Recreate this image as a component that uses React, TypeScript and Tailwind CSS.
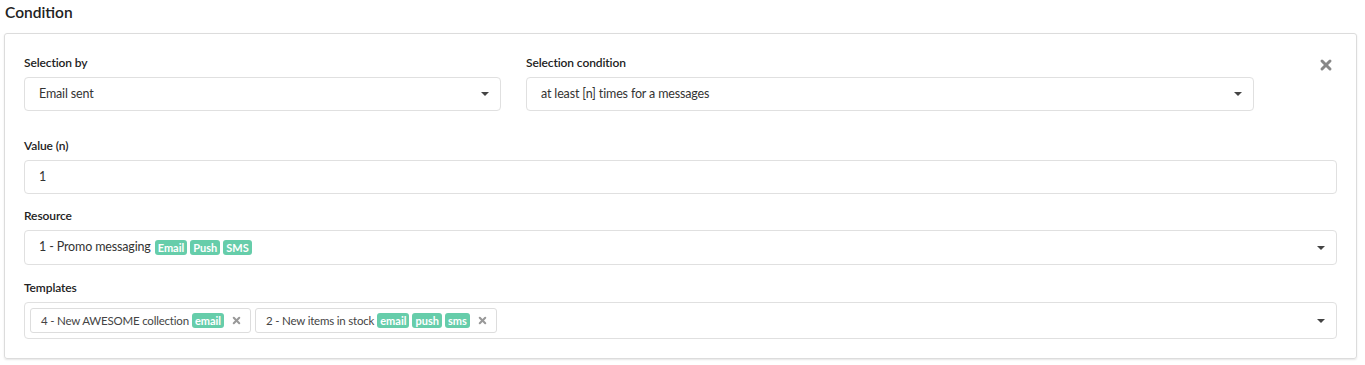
import { X } from "lucide-react";

const Caret = () => (
  <span className="inline-block w-0 h-0 border-l-[4px] border-r-[4px] border-t-[4px] border-l-transparent border-r-transparent border-t-[#444]" />
);

const Badge = ({ label }: { label: string }) => (
  <span className="inline-flex items-center h-[15px] px-[3px] rounded-[3px] bg-[#66cdaa] text-white text-[11px] font-bold leading-none tracking-normal">
    {label}
  </span>
);

const Field = ({ label, children, className = "" }: { label: string; children: React.ReactNode; className?: string }) => (
  <div className={`flex flex-col ${className}`}>
    <label className="text-[12px] font-semibold text-[#222] h-[16px] leading-[16px] mb-[6px] tracking-[-0.1px]">{label}</label>
    {children}
  </div>
);

const Select = ({ children, tall }: { children: React.ReactNode; tall?: boolean }) => (
  <div
    className={`flex items-center justify-between border border-[#e0e0e0] rounded-[4px] bg-white pl-[14px] pr-[11px] ${
      tall ? "h-[35px]" : "h-[34px]"
    }`}
  >
    <div className="flex items-center gap-[3px] text-[12.5px] tracking-[-0.15px] text-[#333]">{children}</div>
    <Caret />
  </div>
);

const Chip = ({ label, tags }: { label: string; tags: string[] }) => (
  <div className="flex items-center gap-[3px] h-[25px] border border-[#ddd] rounded-[3px] pl-[10px] pr-[8px] text-[11.5px] tracking-[-0.2px] text-[#444]">
    <span>{label}</span>
    {tags.map((t) => (
      <Badge key={t} label={t} />
    ))}
    <X className="w-[11px] h-[11px] ml-[4px] text-[#999]" strokeWidth={4.5} />
  </div>
);

export default function App() {
  return (
    <div className="bg-white w-[1365px] h-[365px] pt-[3px] px-[4px]" style={{ fontFamily: "Lato, 'Open Sans', sans-serif" }}>
      <h2 className="text-[15.5px] font-semibold text-[#222] pl-[1px] h-[18px] leading-[18px]">Condition</h2>
      <div className="mt-[12px] w-[1353px] border border-[#dcdcdc] rounded-[3px] shadow-[0_1px_2px_rgba(0,0,0,0.1)] px-[19px] pt-[21px] pb-[19px]">
        <div className="flex items-start">
          <div className="w-[477px]">
            <Field label="Selection by">
              <Select>Email sent</Select>
            </Field>
          </div>
          <div className="w-[728px] ml-[25px]">
            <Field label="Selection condition">
              <Select>at least [n] times for a messages</Select>
            </Field>
          </div>
          <div className="ml-auto mr-[3px] mt-[2px]">
            <X className="w-[16px] h-[16px] text-[#888]" strokeWidth={4.5} />
          </div>
        </div>
        <Field label="Value (n)" className="mt-[27px]">
          <div className="flex items-center h-[34px] border border-[#e0e0e0] rounded-[4px] pl-[14px] text-[12.5px] text-[#333]">1</div>
        </Field>
        <Field label="Resource" className="mt-[14px]">
          <Select tall>
            <span className="mr-[1px]">1 - Promo messaging</span>
            <Badge label="Email" />
            <Badge label="Push" />
            <Badge label="SMS" />
          </Select>
        </Field>
        <Field label="Templates" className="mt-[15px]">
          <div className="flex items-center justify-between h-[37px] border border-[#e0e0e0] rounded-[4px] pl-[5px] pr-[11px]">
            <div className="flex items-center gap-[4px]">
              <Chip label="4 - New AWESOME collection" tags={["email"]} />
              <Chip label="2 - New items in stock" tags={["email", "push", "sms"]} />
            </div>
            <Caret />
          </div>
        </Field>
      </div>
    </div>
  );
}
